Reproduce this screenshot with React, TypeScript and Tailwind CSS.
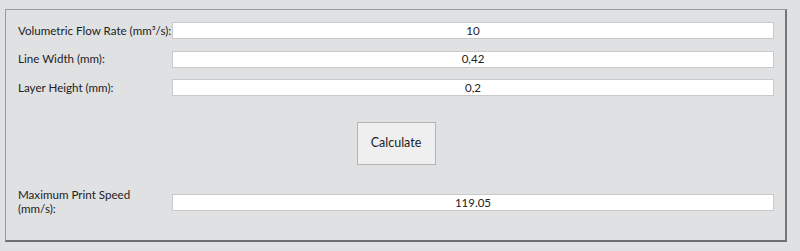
import React from 'react';

const rows = [
  { label: 'Volumetric Flow Rate (mm³/s):', value: '10' },
  { label: 'Line Width (mm):', value: '0,42' },
  { label: 'Layer Height (mm):', value: '0,2' },
];

function Field({ value }: { value: string }) {
  return (
    <input
      readOnly
      value={value}
      className="h-[17px] w-full bg-white border border-[#c9c9c9] text-center text-[11.5px] text-[#222] outline-none font-['Lato',sans-serif]"
    />
  );
}

export default function App() {
  return (
    <div className="w-[800px] h-[251px] bg-[#e0e1e3] pt-[9px] pl-[5px] font-['Lato',sans-serif] text-[11.6px] text-[#222]">
      <div className="w-[782px] h-[233px] border border-t-[#9c9c9c] border-l-[#9c9c9c] border-r-[#767676] border-b-[#6e6e6e] border-r-2 border-b-2 pt-[12px] pl-[12px] pr-[11px] flex flex-col">
        <div className="flex flex-col gap-[11px]">
          {rows.map((r) => (
            <div key={r.label} className="flex items-center">
              <label className="w-[154px] shrink-0 whitespace-nowrap">{r.label}</label>
              <Field value={r.value} />
            </div>
          ))}
        </div>
        <div className="flex justify-center pt-[26px]">
          <button className="w-[79px] h-[43px] bg-[#efefef] border border-[#b4b4b4] text-[12.5px] text-[#222]">
            Calculate
          </button>
        </div>
        <div className="flex items-center mt-[23px]">
          <label className="w-[154px] shrink-0 leading-[14px] pr-[30px]">Maximum Print Speed (mm/s):</label>
          <Field value="119.05" />
        </div>
      </div>
    </div>
  );
}
